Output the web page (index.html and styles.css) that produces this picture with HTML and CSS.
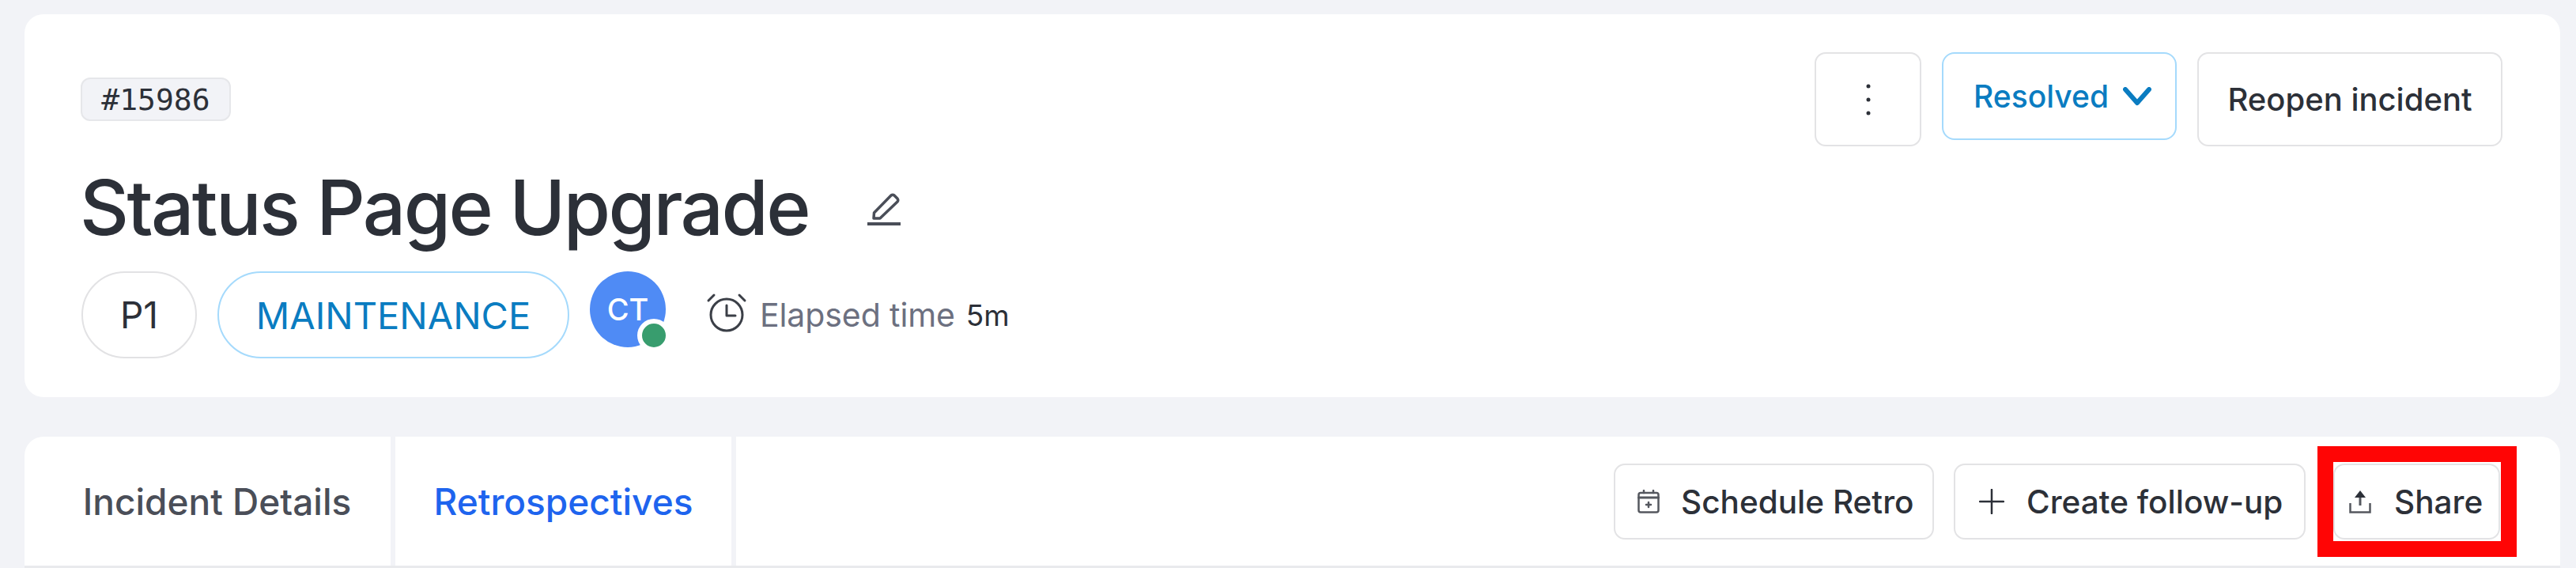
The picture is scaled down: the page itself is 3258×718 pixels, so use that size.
FILE: index.html
```html
<!DOCTYPE html>
<html lang="en">
<head>
<meta charset="utf-8">
<title>Status Page Upgrade</title>
<link rel="stylesheet" href="styles.css">
</head>
<body>
<main class="page">
  <section class="card header-card">
    <div class="header-main">
      <span class="id-badge">#15986</span>
      <div class="title-row">
        <h1 class="title">Status Page Upgrade</h1>
        <svg class="edit-icon" viewBox="0 0 42 42" fill="none" stroke="#4a4e58" stroke-width="3.500" stroke-linejoin="round"><path d="M8 33 L8.500 26 L30 4 Q32 2.500 34 4 L38 8 Q39.500 10 38 12 L16 33 Z"/><path d="M0 40 H42" stroke-width="4"/></svg>
      </div>
      <div class="meta-row">
        <span class="pill pill-grey">P1</span>
        <span class="pill pill-blue">MAINTENANCE</span>
        <span class="avatar">CT<span class="status-dot"></span></span>
        <svg class="clock-icon" viewBox="0 0 52 50" fill="none" stroke="#3b3f47" stroke-width="3" stroke-linecap="round" stroke-linejoin="round"><circle cx="26" cy="28" r="20"/><path d="M26 16 V29 H37"/><path d="M3 10 L10 3"/><path d="M49 10 L42 3"/></svg>
        <span class="elapsed-label">Elapsed time</span>
        <span class="elapsed-value">5m</span>
      </div>
    </div>
    <div class="header-actions">
      <button class="btn btn-more" aria-label="More"><svg class="dots-icon" viewBox="0 0 8 44" fill="#2c3038"><circle cx="4" cy="5" r="2.500"/><circle cx="4" cy="22" r="2.500"/><circle cx="4" cy="39" r="2.500"/></svg></button>
      <button class="btn btn-status">Resolved<svg class="chevron-icon" viewBox="0 0 36 24" fill="none" stroke="#0a7cc1" stroke-width="6" stroke-linecap="round" stroke-linejoin="round"><path d="M3 3 L18 20 L33 3"/></svg></button>
      <button class="btn btn-reopen">Reopen incident</button>
    </div>
  </section>

  <section class="card tabs-card">
    <nav class="tabs">
      <a class="tab tab-details">Incident Details</a>
      <a class="tab tab-retro">Retrospectives</a>
    </nav>
    <div class="tab-actions">
      <button class="btn btn-small btn-schedule"><svg class="small-icon" viewBox="0 0 28 30" fill="none" stroke="#55585f" stroke-width="2.500" stroke-linecap="round"><rect x="1.500" y="4" width="25" height="24.500" rx="2.500"/><path d="M1.500 10 H26.500" stroke-width="3"/><path d="M8 1 V4 M20 1 V4"/><path d="M14 16 V22 M11 19 H17"/></svg>Schedule Retro</button>
      <button class="btn btn-small btn-create"><svg class="plus-icon" viewBox="0 0 32 32" fill="none" stroke="#2c3038" stroke-width="2.500" stroke-linecap="round"><path d="M16 1 V31 M1 16 H31"/></svg>Create follow-up</button>
      <span class="share-wrap">
        <button class="btn btn-small btn-share"><svg class="small-icon" viewBox="0 0 28 30" fill="none" stroke="#55585f" stroke-width="2.500"><path d="M14 20 V8" stroke-width="3"/><path d="M7 10 L14 1 L21 10 Z" fill="#2c3038" stroke="none"/><path d="M1.500 17 V28.500 H26.500 V17"/></svg>Share</button>
        <span class="highlight"></span>
      </span>
    </div>
  </section>
</main>
</body>
</html>
```

FILE: styles.css
```css
* { box-sizing: border-box; }

html, body { margin: 0; height: 100%; }

body {
  background: #f2f3f7;
  font-family: Inter, "Noto Sans", sans-serif;
  color: #2c3038;
  overflow: hidden;
}

.page {
  display: flex;
  flex-direction: column;
  gap: 50px;
  padding: 18px 20px 0 31px;
}

.card {
  background: #fff;
  border-radius: 24px;
}

.header-card {
  height: 484px;
  display: flex;
  justify-content: space-between;
  padding: 48px 73px 0 72px;
}

.header-main {
  display: flex;
  flex-direction: column;
  align-items: flex-start;
}

.id-badge {
  margin-top: 32px;
  margin-left: -1px;
  width: 190px;
  height: 55px;
  display: flex;
  align-items: center;
  justify-content: center;
  background: #f2f3f7;
  border: 2px solid #e6e7ea;
  border-radius: 12px;
  font-family: "DejaVu Sans Mono", monospace;
  font-size: 38px;
  color: #2c3038;
}

.title-row {
  display: flex;
  align-items: center;
  gap: 74px;
  margin-top: 54px;
  margin-left: -2px;
  height: 110px;
}

.title {
  margin: 0;
  font-size: 96px;
  font-weight: 500;
  letter-spacing: -2.600px;
  line-height: 110px;
  color: #2c3038;
  white-space: nowrap;
}

.edit-icon { width: 42px; height: 42px; margin-top: 4px; }

.meta-row {
  display: flex;
  align-items: center;
  margin-top: 26px;
}

.pill {
  display: flex;
  align-items: center;
  justify-content: center;
  height: 110px;
  border-radius: 55px;
  font-size: 46px;
}

.pill-grey {
  width: 146px;
  border: 2px solid #e2e2e4;
  color: #2c3038;
}

.pill-blue {
  width: 445px;
  margin-left: 26px;
  border: 2px solid #a5dafc;
  color: #0a7cc1;
  font-size: 47px;
}

.avatar {
  position: relative;
  width: 96px;
  height: 96px;
  margin-left: 26px;
  margin-top: -14px;
  display: flex;
  align-items: center;
  justify-content: center;
  border-radius: 50%;
  background: #4f8bf5;
  color: #fff;
  font-size: 38px;
  font-weight: 500;
}

.status-dot {
  position: absolute;
  left: 60px;
  top: 60px;
  width: 42px;
  height: 42px;
  border-radius: 50%;
  background: #389d6e;
  border: 6px solid #fff;
}

.clock-icon { width: 52px; height: 50px; margin-left: 51px; margin-top: -6px; }

.elapsed-label {
  margin-left: 16px;
  font-size: 41px;
  letter-spacing: -0.100px;
  color: #6c7080;
}

.elapsed-value {
  margin-left: 14px;
  font-size: 37px;
  color: #2c3038;
}

.header-actions {
  display: flex;
  align-items: flex-start;
  gap: 26px;
}

.btn {
  display: flex;
  align-items: center;
  justify-content: flex-start;
  background: #fff;
  border: 2px solid #e3e3e5;
  border-radius: 14px;
  font-family: inherit;
  color: #2c3038;
  padding: 0;
}

.btn-more { width: 135px; height: 119px; justify-content: center; }
.dots-icon { width: 8px; height: 44px; }

.btn-status {
  width: 297px;
  height: 111px;
  gap: 18px;
  padding-left: 38px;
  border-color: #a5dafc;
  border-radius: 16px;
  color: #0a7cc1;
  font-size: 39px;
  font-weight: 450;
}

.chevron-icon { width: 36px; height: 24px; }

.btn-reopen {
  width: 386px;
  height: 119px;
  justify-content: center;
  font-size: 40px;
  font-weight: 450;
}

.tabs-card {
  height: 166px;
  display: flex;
  justify-content: space-between;
  align-items: flex-start;
  padding-right: 76px;
  border-bottom: 3px solid #e9eaed;
  border-radius: 24px 24px 0 0;
}

.tabs { display: flex; height: 163px; }

.tab {
  display: flex;
  align-items: center;
  justify-content: center;
  font-size: 46px;
  font-weight: 450;
  border-right: 6px solid #f2f3f7;
}

.tab-details { width: 469px; padding-left: 24px; color: #4a4e58; }
.tab-retro { width: 431px; color: #1e64ee; }

.tab-actions {
  display: flex;
  gap: 25px;
  padding-top: 34px;
}

.btn-small {
  height: 96px;
  font-size: 40.500px;
  font-weight: 450;
}

.btn-schedule { width: 405px; padding-left: 28px; gap: 27px; }
.btn-create { width: 445px; padding-left: 30px; gap: 28px; }
.btn-share { width: 211px; padding-left: 18px; gap: 29px; }

.small-icon { width: 28px; height: 30px; }
.plus-icon { width: 32px; height: 32px; }

.share-wrap { position: relative; margin-left: 10px; display: flex; }

.highlight {
  position: absolute;
  left: -20px;
  top: -22px;
  width: 252px;
  height: 140px;
  border: 20px solid #ff0505;
}
```
